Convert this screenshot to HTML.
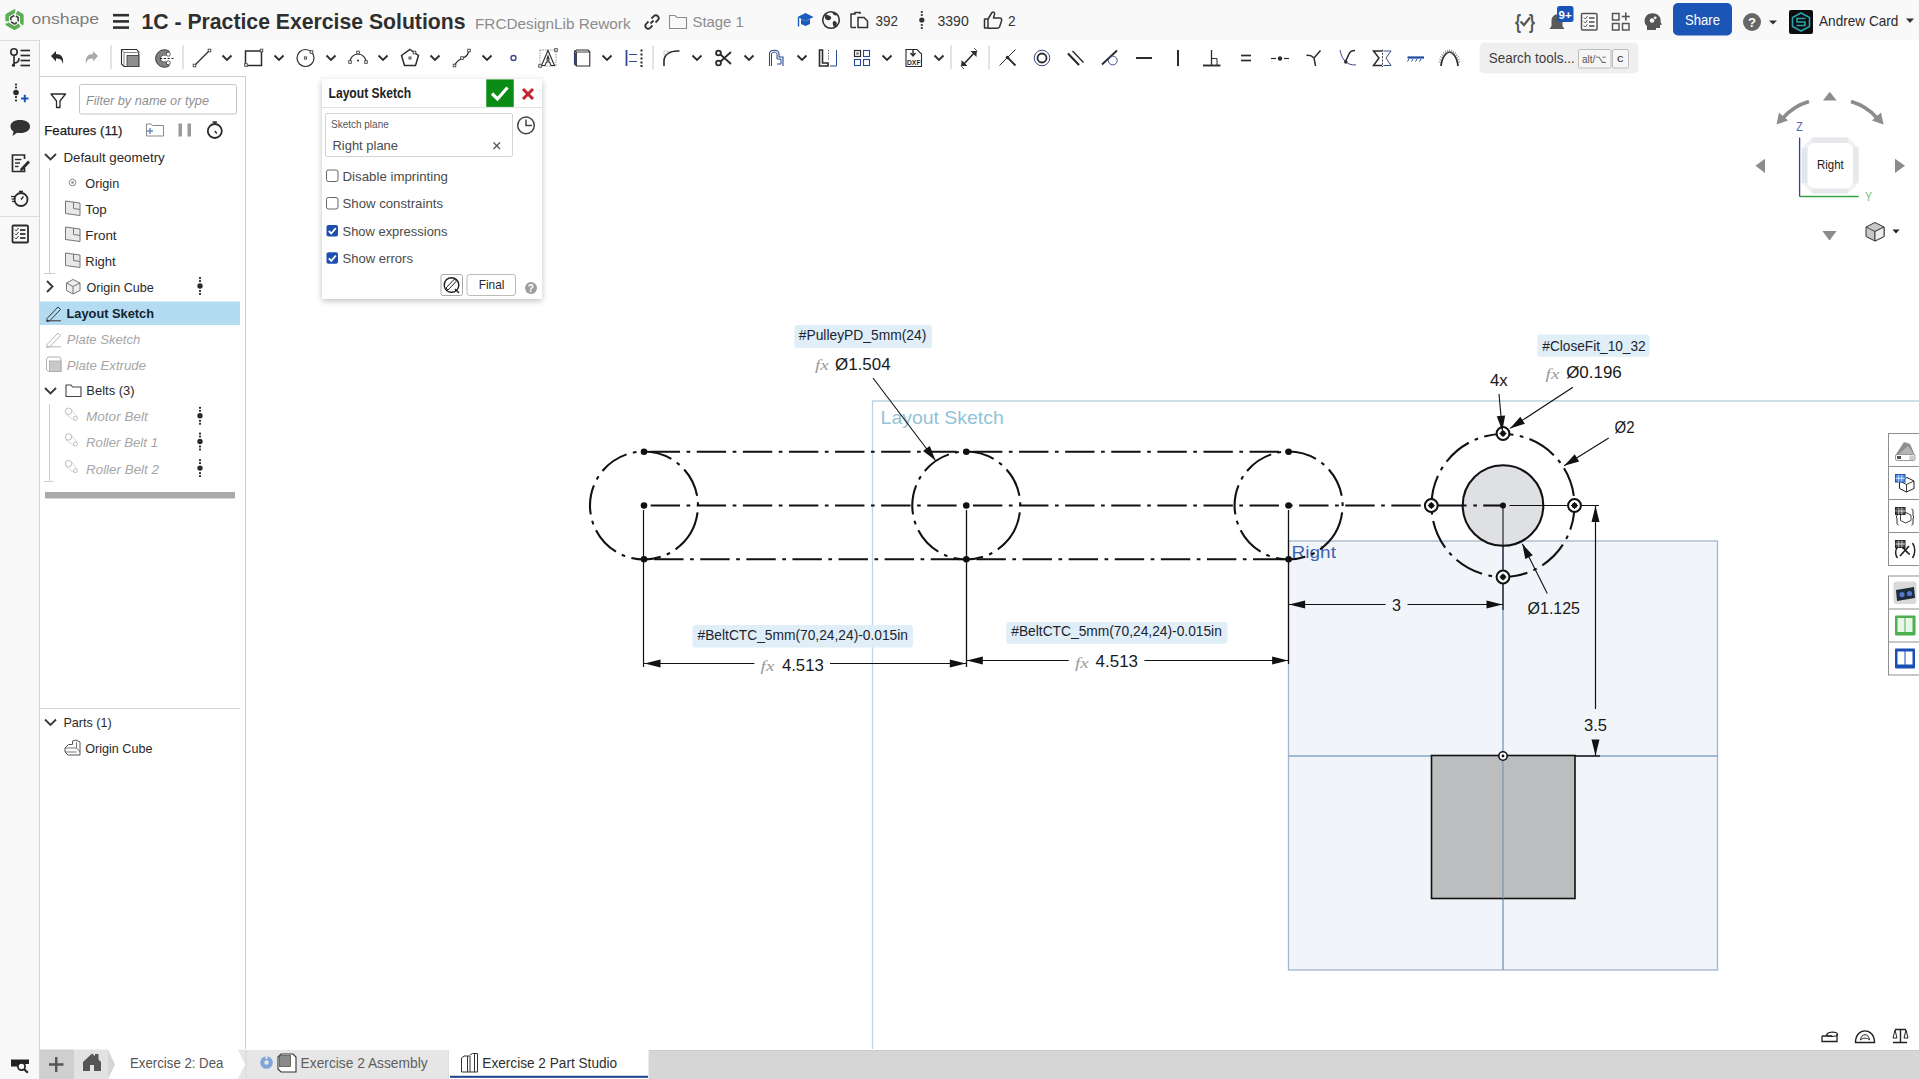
<!DOCTYPE html>
<html><head><meta charset="utf-8"><title>Onshape - 1C - Practice Exercise Solutions</title>
<style>
html,body{margin:0;padding:0;width:1919px;height:1079px;overflow:hidden;background:#fff;font-family:"Liberation Sans", sans-serif;}
svg{display:block;position:absolute;left:0;top:0;}
</style></head>
<body>
<svg width="1919" height="1079" viewBox="0 0 1919 1079">
<defs>
<filter id="sh" x="-20%" y="-20%" width="140%" height="140%"><feGaussianBlur in="SourceAlpha" stdDeviation="3"/><feOffset dy="2"/><feComponentTransfer><feFuncA type="linear" slope="0.25"/></feComponentTransfer><feMerge><feMergeNode/><feMergeNode in="SourceGraphic"/></feMerge></filter>
</defs>
<rect x="0" y="0" width="1919" height="1079" fill="#ffffff" />
<rect x="0" y="0" width="1919" height="40" fill="#f9f9f9" />
<rect x="0" y="40" width="39.5" height="1039" fill="#f8f8f8" />
<line x1="0" y1="40.5" x2="39.5" y2="40.5" stroke="#dcdcdc" stroke-width="1" />
<line x1="39.5" y1="40" x2="39.5" y2="1079" stroke="#d4d4d4" stroke-width="1" />
<line x1="0" y1="216.5" x2="39" y2="216.5" stroke="#dcdcdc" stroke-width="1" />
<line x1="40" y1="76.5" x2="245.5" y2="76.5" stroke="#cfcfcf" stroke-width="1" />
<line x1="245.5" y1="76" x2="245.5" y2="1049" stroke="#cfcfcf" stroke-width="1" />
<path d="M7.14,21.30 L7.14,15.35 L14.50,11.10 L14.87,11.31" fill="none" stroke="#5aad50" stroke-width="3.6" stroke-linejoin="round"/>
<path d="M16.71,12.38 L21.86,15.35 L21.86,23.85 L21.49,24.06" fill="none" stroke="#5aad50" stroke-width="3.6" stroke-linejoin="round"/>
<path d="M19.65,25.13 L14.50,28.10 L7.14,23.85 L7.14,23.42" fill="none" stroke="#5aad50" stroke-width="3.6" stroke-linejoin="round"/>
<path d="M15.80,16.05 L18.22,17.45 L18.22,21.54" fill="none" stroke="#454545" stroke-width="1.7" stroke-linejoin="round"/>
<path d="M16.92,22.50 L14.50,23.90 L10.96,21.86" fill="none" stroke="#454545" stroke-width="1.7" stroke-linejoin="round"/>
<path d="M10.78,20.25 L10.78,17.45 L14.31,15.41" fill="none" stroke="#454545" stroke-width="1.7" stroke-linejoin="round"/>
<text x="31.50" y="24.30" font-size="15.5" fill="#7c7c7c" font-weight="normal" font-style="normal" font-family="Liberation Sans" textLength="67.50" lengthAdjust="spacingAndGlyphs" >onshape</text>
<rect x="113" y="13.899999999999999" width="16" height="2.6" fill="#2e2e2e" />
<rect x="113" y="20.099999999999998" width="16" height="2.6" fill="#2e2e2e" />
<rect x="113" y="26.3" width="16" height="2.6" fill="#2e2e2e" />
<text x="141.50" y="28.50" font-size="22.5" fill="#2f2f2f" font-weight="bold" font-style="normal" font-family="Liberation Sans" textLength="324.00" lengthAdjust="spacingAndGlyphs" >1C - Practice Exercise Solutions</text>
<text x="475.00" y="28.50" font-size="15.3" fill="#8c8c8c" font-weight="normal" font-style="normal" font-family="Liberation Sans" textLength="155.60" lengthAdjust="spacingAndGlyphs" >FRCDesignLib Rework</text>
<g transform="translate(652,22) scale(1)">
<path d="M-1.5,1.5 L1.5,-1.5" fill="none" stroke="#333" stroke-width="1.8" />
<path d="M-0.5,-3.5 L1.8,-5.8 A2.6,2.6 0 0 1 5.8,-1.8 L3.5,0.5" fill="none" stroke="#333" stroke-width="1.8" />
<path d="M0.5,3.5 L-1.8,5.8 A2.6,2.6 0 0 1 -5.8,1.8 L-3.5,-0.5" fill="none" stroke="#333" stroke-width="1.8" />
</g>
<path d="M669.5,28.5 L669.5,15.5 L675,15.5 L677,17.5 L686.5,17.5 L686.5,28.5 Z" fill="none" stroke="#8c8c8c" stroke-width="1.1" />
<text x="692.50" y="26.60" font-size="15.4" fill="#8c8c8c" font-weight="normal" font-style="normal" font-family="Liberation Sans" textLength="51.30" lengthAdjust="spacingAndGlyphs" >Stage 1</text>
<path d="M797.5,17 L805.5,13 L813.5,17 L805.5,21 Z" fill="#1a5bc0" />
<path d="M801,19 L801,24 L805.5,26 L810,24 L810,19 L805.5,21 Z" fill="#1a5bc0" />
<line x1="798.5" y1="17.5" x2="798.5" y2="26.5" stroke="#1a5bc0" stroke-width="1.4" />
<circle cx="831" cy="20" r="8.3" fill="none" stroke="#333" stroke-width="1.6" />
<path d="M826,14 C828,16 830,15 831,17 C832,19 829,21 827,20 C825,19 824,17 826,14 Z" fill="#333" />
<path d="M834,21 C836,21 838,23 836,26 C835,27 833,27 833,25 C833,23 832,22 834,21 Z" fill="#333" />
<path d="M832,12 C834,13 836,13 837,15 C835,16 833,15 832,12 Z" fill="#333" />
<path d="M851,27.5 L851,14 L855,14 L855,12.5 L860,12.5 L860,14" fill="none" stroke="#333" stroke-width="1.5" />
<path d="M858,17.5 L864,17.5 L867.5,21 L867.5,27.5 L858,27.5 Z" fill="none" stroke="#333" stroke-width="1.5" />
<path d="M856,27.5 L851,27.5" fill="none" stroke="#333" stroke-width="1.5" />
<text x="875.60" y="25.60" font-size="15.4" fill="#333" font-weight="normal" font-style="normal" font-family="Liberation Sans" textLength="22.40" lengthAdjust="spacingAndGlyphs" >392</text>
<rect x="920.8" y="11.1" width="2" height="1.8" fill="#333" />
<rect x="920.8" y="14.1" width="2" height="1.8" fill="#333" />
<rect x="920.8" y="24.1" width="2" height="1.8" fill="#333" />
<rect x="920.8" y="27.1" width="2" height="1.8" fill="#333" />
<circle cx="921.8" cy="20" r="2.6" fill="#333" />
<text x="937.50" y="25.60" font-size="15.4" fill="#333" font-weight="normal" font-style="normal" font-family="Liberation Sans" textLength="31.20" lengthAdjust="spacingAndGlyphs" >3390</text>
<path d="M984.5,19 L988,19 L988,28 L984.5,28 Z M988,19 L992,12.5 C993.5,11.5 995,12.5 994.5,14.5 L993.5,18 L999.5,18 C1001.5,18 1002,19.5 1001.5,21 L999.5,27 C999,28 998,28.2 997,28.2 L988,28.2" fill="none" stroke="#333" stroke-width="1.5" stroke-linejoin="round"/>
<text x="1008.00" y="25.60" font-size="15.4" fill="#333" font-weight="normal" font-style="normal" font-family="Liberation Sans" textLength="7.60" lengthAdjust="spacingAndGlyphs" >2</text>
<text x="1515.00" y="29.00" font-size="20" fill="#555" font-weight="bold" font-style="normal" font-family="Liberation Sans" textLength="6.00" lengthAdjust="spacingAndGlyphs" >{</text>
<text x="1529.00" y="29.00" font-size="20" fill="#555" font-weight="bold" font-style="normal" font-family="Liberation Sans" textLength="6.00" lengthAdjust="spacingAndGlyphs" >}</text>
<path d="M1520.5,21.5 L1524,25 L1530,17.5" fill="none" stroke="#555" stroke-width="2.2" />
<path d="M1549.5,29 L1564.5,29 L1562.5,26 L1562.5,21 C1562.5,17 1560,14.5 1557,14.5 C1554,14.5 1551.5,17 1551.5,21 L1551.5,26 Z" fill="#5a5a5a" />
<rect x="1557" y="6" width="16.5" height="16" fill="#1a55b8" rx="2.5" />
<text x="1558.60" y="18.80" font-size="11.5" fill="#ffffff" font-weight="bold" font-style="normal" font-family="Liberation Sans" textLength="13.00" lengthAdjust="spacingAndGlyphs" >9+</text>
<rect x="1581.5" y="13.5" width="15.5" height="16.5" fill="none" stroke="#555" stroke-width="1.5" rx="1" />
<line x1="1589" y1="18" x2="1594.5" y2="18" stroke="#555" stroke-width="1.6" />
<path d="M1583.8,17.5 L1585.3,19 L1587.5,16.2" fill="none" stroke="#555" stroke-width="1" />
<line x1="1589" y1="22" x2="1594.5" y2="22" stroke="#555" stroke-width="1.6" />
<path d="M1583.8,21.5 L1585.3,23 L1587.5,20.2" fill="none" stroke="#555" stroke-width="1" />
<line x1="1589" y1="26" x2="1594.5" y2="26" stroke="#555" stroke-width="1.6" />
<path d="M1583.8,25.5 L1585.3,27 L1587.5,24.2" fill="none" stroke="#555" stroke-width="1" />
<rect x="1612.5" y="13.5" width="6.5" height="6.5" fill="none" stroke="#555" stroke-width="1.5" />
<rect x="1612.5" y="23.5" width="6.5" height="6.5" fill="none" stroke="#555" stroke-width="1.5" />
<rect x="1622.5" y="23.5" width="6.5" height="6.5" fill="none" stroke="#555" stroke-width="1.5" />
<line x1="1625.8" y1="12.5" x2="1625.8" y2="20.5" stroke="#555" stroke-width="1.6" />
<line x1="1621.8" y1="16.5" x2="1629.8" y2="16.5" stroke="#555" stroke-width="1.6" />
<path d="M1647,30 L1647,26 C1644,24 1644,19 1646,16.5 C1648,13 1655,12 1658.5,15.5 C1660.5,17.5 1661,20 1660.5,22 L1662,24.5 L1660,25 L1660,28 L1656,28 L1656,30 Z" fill="#555" />
<circle cx="1652" cy="20.5" r="2.3" fill="#f6f6f6" />
<circle cx="1655.2" cy="17.8" r="1.4" fill="#f6f6f6" />
<rect x="1673" y="3" width="59" height="32.5" fill="#1b56b6" rx="5" />
<text x="1685.00" y="25.00" font-size="15.4" fill="#ffffff" font-weight="normal" font-style="normal" font-family="Liberation Sans" textLength="35.00" lengthAdjust="spacingAndGlyphs" >Share</text>
<circle cx="1752" cy="22" r="9" fill="#666" />
<text x="1748.00" y="27.00" font-size="13.5" fill="#ffffff" font-weight="bold" font-style="normal" font-family="Liberation Sans" textLength="8.00" lengthAdjust="spacingAndGlyphs" >?</text>
<path d="M1769,20.5 L1777,20.5 L1773,24.5 Z" fill="#333" />
<rect x="1789" y="10" width="24" height="24" fill="#0d0d0d" rx="2" />
<path d="M1801,13 L1809.5,17.5 L1809.5,26.5 L1801,31 L1792.5,26.5 L1792.5,17.5 Z" fill="none" stroke="#2aa0ad" stroke-width="1.6" />
<path d="M1805.5,18.5 L1797,18.5 L1797,22 L1805,22 L1805,25.5 L1796.5,25.5" fill="none" stroke="#2aa0ad" stroke-width="1.6" />
<text x="1819.00" y="25.50" font-size="14.2" fill="#2a2a2a" font-weight="normal" font-style="normal" font-family="Liberation Sans" textLength="79.40" lengthAdjust="spacingAndGlyphs" >Andrew Card</text>
<path d="M1906,18.5 L1914,18.5 L1910,23 Z" fill="#333" />
<circle cx="14" cy="52" r="3.2" fill="none" stroke="#2b2b2b" stroke-width="1.6" />
<path d="M14,55.2 L14,65 M14,63 C16,63 19,62 19,58" fill="none" stroke="#2b2b2b" stroke-width="1.6" />
<circle cx="13.5" cy="65.2" r="1.6" fill="#2b2b2b" />
<line x1="20.5" y1="50.5" x2="30" y2="50.5" stroke="#2b2b2b" stroke-width="1.7" />
<line x1="20.5" y1="55.5" x2="30" y2="55.5" stroke="#2b2b2b" stroke-width="1.7" />
<line x1="20.5" y1="60.5" x2="30" y2="60.5" stroke="#2b2b2b" stroke-width="1.7" />
<line x1="20.5" y1="65.5" x2="30" y2="65.5" stroke="#2b2b2b" stroke-width="1.7" />
<path d="M51,56 L56,51 L56,54 C61,54 64,57 63,64 C62,59.5 60,58.5 56,58.5 L56,61.5 Z" fill="#2b2b2b" />
<path d="M98,56 L93,51 L93,54 C88,54 85,57 86,64 C87,59.5 89,58.5 93,58.5 L93,61.5 Z" fill="#a9a9a9" />
<line x1="111" y1="45.5" x2="111" y2="69.5" stroke="#d0d0d0" stroke-width="1.2" />
<path d="M121.5,49.5 L136.5,49.5 L138.8,52 L138.8,66.5 L124,66.5 L121.5,64 Z" fill="#fff" stroke="#2b2b2b" stroke-width="1.1" />
<path d="M124,52.5 L136.5,52.5 L138.8,52 M124,52.5 L124,66.5 M121.5,49.5 L124,52.5" fill="none" stroke="#666" stroke-width="0.8" />
<rect x="127" y="55.5" width="11.8" height="11" fill="#8f8f8f" stroke="#444" stroke-width="0.9" />
<path d="M168.2,53.8 A6.2,6.2 0 1 0 168.2,63.2" fill="none" stroke="#808080" stroke-width="5.2" />
<path d="M169.5,51.3 A8.8,8.8 0 1 0 169.5,65.7" fill="none" stroke="#333" stroke-width="0.9" />
<path d="M165.6,55.6 A3.4,3.4 0 1 0 165.6,61.4" fill="none" stroke="#333" stroke-width="0.8" />
<circle cx="168.3" cy="54.2" r="2.0" fill="#fff" stroke="#333" stroke-width="0.8" />
<circle cx="168.3" cy="62.8" r="2.0" fill="#fff" stroke="#333" stroke-width="0.8" />
<line x1="160" y1="58.5" x2="173.5" y2="58.5" stroke="#222" stroke-width="1.2" stroke-dasharray="2.2 1.6"/>
<line x1="183" y1="45.5" x2="183" y2="69.5" stroke="#d0d0d0" stroke-width="1.2" />
<line x1="194.5" y1="65.5" x2="209.5" y2="50.5" stroke="#2b2b2b" stroke-width="1.3" />
<rect x="193.2" y="64.2" width="2.6" height="2.6" fill="#fff" stroke="#444" stroke-width="0.9" />
<rect x="208.2" y="49.2" width="2.6" height="2.6" fill="#fff" stroke="#444" stroke-width="0.9" />
<path d="M222.5,55.5 L227,60 L231.5,55.5" fill="none" stroke="#2b2b2b" stroke-width="1.8" />
<rect x="245.5" y="51" width="16" height="14.5" fill="none" stroke="#2b2b2b" stroke-width="1.5" />
<rect x="244.7" y="63.7" width="2.6" height="2.6" fill="#fff" stroke="#444" stroke-width="0.9" />
<rect x="260.2" y="49.2" width="2.6" height="2.6" fill="#fff" stroke="#444" stroke-width="0.9" />
<path d="M274.5,55.5 L279,60 L283.5,55.5" fill="none" stroke="#2b2b2b" stroke-width="1.8" />
<circle cx="305.5" cy="58" r="8.5" fill="none" stroke="#2b2b2b" stroke-width="1.2" />
<rect x="304.4" y="56.9" width="2.2" height="2.2" fill="#fff" stroke="#444" stroke-width="0.9" />
<rect x="310.2" y="50.7" width="2.6" height="2.6" fill="#fff" stroke="#444" stroke-width="0.9" />
<path d="M326.5,55.5 L331,60 L335.5,55.5" fill="none" stroke="#2b2b2b" stroke-width="1.8" />
<path d="M350,62 A8,8 0 0 1 366,62" fill="none" stroke="#2b2b2b" stroke-width="1.2" />
<rect x="348.7" y="60.7" width="2.6" height="2.6" fill="#fff" stroke="#444" stroke-width="0.9" />
<rect x="364.7" y="60.7" width="2.6" height="2.6" fill="#fff" stroke="#444" stroke-width="0.9" />
<rect x="356.7" y="51.2" width="2.6" height="2.6" fill="#fff" stroke="#444" stroke-width="0.9" />
<line x1="357" y1="60.5" x2="359" y2="60.5" stroke="#2b2b2b" stroke-width="1.5" />
<path d="M378.5,55.5 L383,60 L387.5,55.5" fill="none" stroke="#2b2b2b" stroke-width="1.8" />
<path d="M410,49.5 L418.5,55.5 L415.5,65.5 L404.5,65.5 L401.5,55.5 Z" fill="none" stroke="#2b2b2b" stroke-width="1.5" />
<rect x="409.0" y="57.0" width="2" height="2" fill="#fff" stroke="#444" stroke-width="0.9" />
<rect x="413.2" y="51.2" width="2.6" height="2.6" fill="#fff" stroke="#444" stroke-width="0.9" />
<path d="M430.5,55.5 L435,60 L439.5,55.5" fill="none" stroke="#2b2b2b" stroke-width="1.8" />
<path d="M454.5,65.5 C457,60 461,59 463,58 C466,57 468,55 469,50.5" fill="none" stroke="#2b2b2b" stroke-width="1.2" />
<rect x="453.2" y="64.2" width="2.6" height="2.6" fill="#fff" stroke="#444" stroke-width="0.9" />
<rect x="460.7" y="56.7" width="2.6" height="2.6" fill="#fff" stroke="#444" stroke-width="0.9" />
<rect x="467.7" y="49.2" width="2.6" height="2.6" fill="#fff" stroke="#444" stroke-width="0.9" />
<path d="M482.5,55.5 L487,60 L491.5,55.5" fill="none" stroke="#2b2b2b" stroke-width="1.8" />
<circle cx="513.5" cy="58" r="2.5" fill="none" stroke="#3d4a8a" stroke-width="1.4" />
<rect x="540" y="50" width="16" height="16" fill="none" stroke="#555" stroke-width="0.6" stroke-dasharray="1.5 1"/>
<path d="M541.5,65.5 L548,50.5 L554.5,65.5 L551,65.5 L549.6,62 L546.4,62 L545,65.5 Z M547,59 L549,59 L548,56 Z" fill="#fff" stroke="#2b2b2b" stroke-width="1.1" />
<rect x="546.5" y="59.5" width="3" height="2" fill="#555" />
<rect x="554.7" y="48.7" width="2.6" height="2.6" fill="#fff" stroke="#444" stroke-width="0.9" />
<rect x="538.7" y="64.7" width="2.6" height="2.6" fill="#fff" stroke="#444" stroke-width="0.9" />
<path d="M574.5,52 L576.5,50 L588,50 L589.8,51.8 L589.8,66 L576.5,66 L574.5,64 Z" fill="#fff" stroke="#2b2b2b" stroke-width="1.1" />
<path d="M576.5,52 L589.8,52 M576.5,52 L576.5,66 M574.5,50.5 L576.5,52" fill="none" stroke="#2b2b2b" stroke-width="0.9" />
<line x1="575.3" y1="52.5" x2="575.3" y2="65" stroke="#2a4b8f" stroke-width="1.8" />
<path d="M602.5,55.5 L607,60 L611.5,55.5" fill="none" stroke="#2b2b2b" stroke-width="1.8" />
<line x1="626.5" y1="50" x2="626.5" y2="66" stroke="#2a4b8f" stroke-width="1.8" />
<path d="M629,54.5 L637,54.5 M629,61.5 L637,61.5" fill="none" stroke="#2a4b8f" stroke-width="1" />
<rect x="640.5" y="49.5" width="2" height="2" fill="#2b2b2b" />
<rect x="640.5" y="53.5" width="2" height="2" fill="#2b2b2b" />
<rect x="640.5" y="57.5" width="2" height="2" fill="#2b2b2b" />
<rect x="640.5" y="61.5" width="2" height="2" fill="#2b2b2b" />
<rect x="640.5" y="65" width="2" height="2" fill="#2b2b2b" />
<line x1="653" y1="45.5" x2="653" y2="69.5" stroke="#d0d0d0" stroke-width="1.2" />
<path d="M664,66 L664,61 C664,55 669,50.5 679.5,51" fill="none" stroke="#2b2b2b" stroke-width="1.6" />
<rect x="664" y="51" width="4" height="4" fill="none" stroke="#999" stroke-width="0.5" />
<path d="M692.5,55.5 L697,60 L701.5,55.5" fill="none" stroke="#2b2b2b" stroke-width="1.8" />
<circle cx="718.5" cy="53" r="2.4" fill="none" stroke="#2b2b2b" stroke-width="1.8" />
<circle cx="718.5" cy="63" r="2.4" fill="none" stroke="#2b2b2b" stroke-width="1.8" />
<path d="M720.5,54.5 L731,64 M720.5,61.5 L731,52" fill="none" stroke="#2b2b2b" stroke-width="1.8" />
<path d="M744.5,55.5 L749,60 L753.5,55.5" fill="none" stroke="#2b2b2b" stroke-width="1.8" />
<path d="M769.5,66 L769.5,54 C769.5,49 779,49 779,54 L779,57 L783,57 L783,66" fill="none" stroke="#2a4b8f" stroke-width="1.1" />
<path d="M771.5,66 L771.5,54 C771.5,51.5 777,51.5 777,54 L777,59 L781,59 L781,64 L777,64" fill="none" stroke="#2a4b8f" stroke-width="1" />
<path d="M797.5,55.5 L802,60 L806.5,55.5" fill="none" stroke="#2b2b2b" stroke-width="1.8" />
<path d="M819.5,50 L822.5,50 L822.5,63 L828,63 L828,66 L819.5,66 Z" fill="none" stroke="#2b2b2b" stroke-width="1.6" />
<path d="M836.5,50 L836.5,66 L830,66" fill="none" stroke="#2a4b8f" stroke-width="1" />
<line x1="828.5" y1="50" x2="828.5" y2="61" stroke="#555" stroke-width="1" stroke-dasharray="1.2 1.5"/>
<rect x="854.5" y="50.5" width="6" height="6" fill="none" stroke="#2b2b2b" stroke-width="1.2" />
<rect x="856.3" y="52.3" width="2.4" height="2.4" fill="#777" />
<rect x="863.5" y="50.5" width="6" height="6" fill="none" stroke="#2a4b8f" stroke-width="1.1" />
<rect x="854.5" y="59.5" width="6" height="6" fill="none" stroke="#2a4b8f" stroke-width="1.1" />
<rect x="863.5" y="59.5" width="6" height="6" fill="none" stroke="#2a4b8f" stroke-width="1.1" />
<path d="M882.5,55.5 L887,60 L891.5,55.5" fill="none" stroke="#2b2b2b" stroke-width="1.8" />
<path d="M906,49.5 L917,49.5 L921.5,54 L921.5,66.5 L906,66.5 Z" fill="none" stroke="#2b2b2b" stroke-width="1.1" />
<path d="M913,50 L913,55 M910.5,53 L913,56 L915.5,53" fill="none" stroke="#2b2b2b" stroke-width="1.4" />
<text x="907.00" y="64.80" font-size="6.5" fill="#2b2b2b" font-weight="bold" font-style="normal" font-family="Liberation Sans" textLength="13.50" lengthAdjust="spacingAndGlyphs" >DXF</text>
<path d="M934.5,55.5 L939,60 L943.5,55.5" fill="none" stroke="#2b2b2b" stroke-width="1.8" />
<line x1="951" y1="45.5" x2="951" y2="69.5" stroke="#d0d0d0" stroke-width="1.2" />
<path d="M963,65 L975,52" fill="none" stroke="#2b2b2b" stroke-width="1.6" />
<path d="M961.5,66 L961.5,60 L967.5,66 Z M976.5,51 L976.5,57 L970.5,51 Z" fill="#2b2b2b" />
<path d="M963,62 L961,66 L964,69 M975,55 L977,51 L974,48" fill="none" stroke="#2b2b2b" stroke-width="0.8" />
<line x1="989" y1="45.5" x2="989" y2="69.5" stroke="#d0d0d0" stroke-width="1.2" />
<path d="M999.5,65.5 L1015.5,49.5" fill="none" stroke="#2b2b2b" stroke-width="1" />
<path d="M1007.5,57.5 L1015.5,65.5" fill="none" stroke="#2b2b2b" stroke-width="1.8" />
<circle cx="1007.5" cy="57.5" r="1.8" fill="#2b2b2b" />
<circle cx="1042" cy="58" r="7.8" fill="none" stroke="#3d4a8a" stroke-width="1" />
<circle cx="1042" cy="58" r="4.5" fill="none" stroke="#2b2b2b" stroke-width="1.8" />
<path d="M1068,53.5 L1079,65 M1072.5,51 L1083.5,62.5" fill="none" stroke="#2b2b2b" stroke-width="1.4" />
<path d="M1068,53.5 L1079,65" fill="none" stroke="#2b2b2b" stroke-width="1.9" />
<path d="M1102,64.5 L1117,50.5" fill="none" stroke="#2b2b2b" stroke-width="1.9" />
<circle cx="1112.8" cy="60.5" r="4.4" fill="none" stroke="#3d4a8a" stroke-width="1" />
<line x1="1136" y1="58" x2="1152" y2="58" stroke="#2b2b2b" stroke-width="2" />
<line x1="1178" y1="50" x2="1178" y2="66" stroke="#2b2b2b" stroke-width="2" />
<line x1="1203" y1="65.5" x2="1220.5" y2="65.5" stroke="#2b2b2b" stroke-width="1.9" />
<line x1="1211.5" y1="50" x2="1211.5" y2="65.5" stroke="#2b2b2b" stroke-width="1.3" />
<path d="M1211.5,58.5 L1217,58.5 L1217,65.5" fill="none" stroke="#2b2b2b" stroke-width="1" />
<line x1="1241" y1="55.5" x2="1251" y2="55.5" stroke="#2b2b2b" stroke-width="1.7" />
<line x1="1241" y1="60.5" x2="1251" y2="60.5" stroke="#2b2b2b" stroke-width="1.7" />
<line x1="1271" y1="58.5" x2="1276" y2="58.5" stroke="#2b2b2b" stroke-width="1.2" />
<line x1="1284" y1="58.5" x2="1289" y2="58.5" stroke="#2b2b2b" stroke-width="1.2" />
<circle cx="1280" cy="58.5" r="2.2" fill="#2b2b2b" />
<path d="M1306.5,55.5 C1309,55 1312,56 1314,58 M1314,58 L1320.5,50.5 M1314,58 C1314.5,61 1315,63 1315.5,66" fill="none" stroke="#2b2b2b" stroke-width="1.5" />
<path d="M1340,50 C1341,55 1343,60 1346,62 C1348,64 1351,65 1356,65" fill="none" stroke="#3d4a8a" stroke-width="1" />
<path d="M1345.5,61.5 L1349.5,53 C1350.5,51 1352,50.5 1355,50.5" fill="none" stroke="#2b2b2b" stroke-width="1.6" />
<circle cx="1345.8" cy="62" r="1.8" fill="#2b2b2b" />
<path d="M1382,51 L1373.5,51 L1379,58 L1373.5,65.5 L1382,65.5" fill="none" stroke="#2b2b2b" stroke-width="1.5" />
<path d="M1383.5,51 L1391,51 L1386,58 L1391,65.5 L1383.5,65.5" fill="none" stroke="#3d4a8a" stroke-width="1" />
<line x1="1382.5" y1="49.5" x2="1382.5" y2="67" stroke="#2b2b2b" stroke-width="0.9" stroke-dasharray="2 1.3"/>
<line x1="1407.5" y1="57.5" x2="1424" y2="57.5" stroke="#1b4a9a" stroke-width="2.2" />
<line x1="1409" y1="59" x2="1407.5" y2="61.5" stroke="#1b4a9a" stroke-width="1" />
<line x1="1413" y1="59" x2="1411.5" y2="61.5" stroke="#1b4a9a" stroke-width="1" />
<line x1="1417" y1="59" x2="1415.5" y2="61.5" stroke="#1b4a9a" stroke-width="1" />
<line x1="1421" y1="59" x2="1419.5" y2="61.5" stroke="#1b4a9a" stroke-width="1" />
<path d="M1441,66 C1442,56 1447,52 1449.5,52 C1452,52 1457,56 1458,66" fill="none" stroke="#2b2b2b" stroke-width="1.7" />
<line x1="1441.1046491049412" y1="62.27922088455746" x2="1438.6354282534535" y2="61.73170025691665" stroke="#666" stroke-width="0.7" />
<line x1="1441.5420035995621" y1="60.134876935105225" x2="1439.201416422963" y2="58.90506505082053" stroke="#666" stroke-width="0.7" />
<line x1="1442.3028443065596" y1="58.147647158331296" x2="1440.186033808489" y2="56.285534890527614" stroke="#666" stroke-width="0.7" />
<line x1="1443.356243657467" y1="56.39831086114449" x2="1441.5492564978988" y2="53.97959158969046" stroke="#666" stroke-width="0.7" />
<line x1="1444.6593818080682" y1="54.95797717007299" x2="1443.235670575147" y2="52.08096990600531" stroke="#666" stroke-width="0.7" />
<line x1="1446.1592872309416" y1="53.885194501934045" x2="1445.1767246518068" y2="50.666847298003965" stroke="#666" stroke-width="0.7" />
<line x1="1447.7949899658422" y1="53.22357061734441" x2="1447.293516426384" y2="49.79470672286308" stroke="#666" stroke-width="0.7" />
<line x1="1449.5" y1="53.0" x2="1449.5" y2="49.5" stroke="#666" stroke-width="0.7" />
<line x1="1451.2050100341578" y1="53.22357061734441" x2="1451.706483573616" y2="49.79470672286308" stroke="#666" stroke-width="0.7" />
<line x1="1452.8407127690584" y1="53.885194501934045" x2="1453.8232753481932" y2="50.666847298003965" stroke="#666" stroke-width="0.7" />
<line x1="1454.3406181919318" y1="54.95797717007299" x2="1455.764329424853" y2="52.08096990600531" stroke="#666" stroke-width="0.7" />
<line x1="1455.643756342533" y1="56.39831086114449" x2="1457.4507435021012" y2="53.979591589690465" stroke="#666" stroke-width="0.7" />
<line x1="1456.6971556934404" y1="58.147647158331296" x2="1458.813966191511" y2="56.285534890527614" stroke="#666" stroke-width="0.7" />
<line x1="1457.4579964004379" y1="60.13487693510523" x2="1459.798583577037" y2="58.90506505082053" stroke="#666" stroke-width="0.7" />
<line x1="1457.8953508950588" y1="62.27922088455746" x2="1460.3645717465465" y2="61.73170025691665" stroke="#666" stroke-width="0.7" />
<rect x="1479.5" y="42.5" width="159" height="31" fill="#efefef" rx="5" />
<text x="1488.70" y="62.50" font-size="14.5" fill="#3e3e3e" font-weight="normal" font-style="normal" font-family="Liberation Sans" textLength="86.00" lengthAdjust="spacingAndGlyphs" >Search tools...</text>
<rect x="1578.5" y="49.5" width="32.5" height="18.5" fill="#f6f6f6" stroke="#bdbdbd" stroke-width="1" rx="1.5" />
<text x="1582.00" y="62.50" font-size="11" fill="#555" font-weight="normal" font-style="normal" font-family="Liberation Sans" textLength="25.00" lengthAdjust="spacingAndGlyphs" >alt/⌥</text>
<rect x="1612.5" y="49.5" width="16" height="18.5" fill="#f6f6f6" stroke="#bdbdbd" stroke-width="1" rx="1.5" />
<text x="1617.00" y="62.00" font-size="11.5" fill="#333" font-weight="normal" font-style="normal" font-family="Liberation Sans" textLength="6.50" lengthAdjust="spacingAndGlyphs" >c</text>
<rect x="15" y="83.6" width="2" height="1.8" fill="#2b2b2b" />
<rect x="15" y="86.6" width="2" height="1.8" fill="#2b2b2b" />
<rect x="15" y="96.1" width="2" height="1.8" fill="#2b2b2b" />
<rect x="15" y="99.6" width="2" height="1.8" fill="#2b2b2b" />
<circle cx="16" cy="92.5" r="2.8" fill="#2b2b2b" />
<path d="M21,98.5 L28.5,98.5 M24.8,94.8 L24.8,102.2" fill="none" stroke="#1a55b8" stroke-width="2" />
<path d="M20,120 C26,120 30,122.5 30,126.5 C30,130.5 26,133 20,133 C19,133 18,133 17,132.8 L12.5,136 L13.5,131.5 C11.5,130.2 10.5,128.5 10.5,126.5 C10.5,122.5 14,120 20,120 Z" fill="#333" />
<path d="M24.5,159 L24.5,155 L12.5,155 L12.5,171.5 L24.5,171.5 L24.5,168" fill="none" stroke="#2b2b2b" stroke-width="1.7" />
<line x1="15" y1="159.5" x2="21.5" y2="159.5" stroke="#2b2b2b" stroke-width="1.4" />
<line x1="15" y1="163" x2="20" y2="163" stroke="#2b2b2b" stroke-width="1.4" />
<line x1="15" y1="166.5" x2="18.5" y2="166.5" stroke="#2b2b2b" stroke-width="1.4" />
<path d="M20.5,168.5 L28,160.5 L30,162.5 L22.5,170.5 L20,171 Z" fill="#2b2b2b" />
<circle cx="21" cy="199.5" r="6.5" fill="none" stroke="#2b2b2b" stroke-width="1.8" />
<line x1="19" y1="191.5" x2="23" y2="191.5" stroke="#2b2b2b" stroke-width="1.6" />
<line x1="21" y1="199.5" x2="23.5" y2="196.5" stroke="#2b2b2b" stroke-width="1.4" />
<line x1="11.0" y1="196.5" x2="15.5" y2="196.5" stroke="#2b2b2b" stroke-width="1.2" />
<line x1="11.5" y1="199" x2="15.5" y2="199" stroke="#2b2b2b" stroke-width="1.2" />
<line x1="12.0" y1="201.5" x2="15.5" y2="201.5" stroke="#2b2b2b" stroke-width="1.2" />
<rect x="12.5" y="225.5" width="15.5" height="17" fill="none" stroke="#2b2b2b" stroke-width="1.8" rx="1" />
<line x1="20" y1="230" x2="25.5" y2="230" stroke="#2b2b2b" stroke-width="1.7" />
<path d="M14.8,229.6 L16.2,231 L18.5,228" fill="none" stroke="#2b2b2b" stroke-width="0.9" />
<line x1="20" y1="234" x2="25.5" y2="234" stroke="#2b2b2b" stroke-width="1.7" />
<path d="M14.8,233.6 L16.2,235 L18.5,232" fill="none" stroke="#2b2b2b" stroke-width="0.9" />
<line x1="20" y1="238" x2="25.5" y2="238" stroke="#2b2b2b" stroke-width="1.7" />
<path d="M14.8,237.6 L16.2,239 L18.5,236" fill="none" stroke="#2b2b2b" stroke-width="0.9" />
<path d="M11,1059.5 L29,1059.5 L29,1064 L25,1064 C23,1062.5 19,1063 18,1066.5 L11,1066.5 Z" fill="#222" />
<circle cx="21.5" cy="1066.5" r="3.6" fill="#f8f8f8" stroke="#222" stroke-width="1.7" />
<line x1="24.2" y1="1069.2" x2="27.8" y2="1072.8" stroke="#222" stroke-width="2" />
<path d="M51,94 L65.5,94 L60,101 L60,107.5 L56.5,107.5 L56.5,101 Z" fill="none" stroke="#2b2b2b" stroke-width="1.3" stroke-linejoin="round"/>
<rect x="79.5" y="84.5" width="157" height="29.5" fill="#fff" stroke="#c4c4c4" stroke-width="1" rx="2" />
<text x="86.00" y="104.70" font-size="13.2" fill="#8f8f8f" font-weight="normal" font-style="italic" font-family="Liberation Sans" textLength="123.00" lengthAdjust="spacingAndGlyphs" >Filter by name or type</text>
<text x="44.30" y="134.60" font-size="13.4" fill="#1e1e1e" font-weight="normal" font-style="normal" font-family="Liberation Sans" textLength="78.20" lengthAdjust="spacingAndGlyphs" stroke="#1e1e1e" stroke-width="0.25">Features (11)</text>
<path d="M146.5,124 L151,124 L152.5,125.5 L163.5,125.5 L163.5,136 L146.5,136 Z" fill="none" stroke="#888" stroke-width="1" />
<path d="M147,131 L153,131 M150,128 L150,134" fill="none" stroke="#6a8bc4" stroke-width="1.5" />
<rect x="178.5" y="123.5" width="3.5" height="13" fill="#9a9a9a" />
<rect x="187.5" y="123.5" width="3.5" height="13" fill="#9a9a9a" />
<circle cx="214.8" cy="131" r="7" fill="none" stroke="#2b2b2b" stroke-width="1.8" />
<line x1="212.5" y1="122" x2="217" y2="122" stroke="#2b2b2b" stroke-width="1.5" />
<line x1="214.8" y1="122" x2="214.8" y2="124" stroke="#2b2b2b" stroke-width="1.5" />
<line x1="214.8" y1="131" x2="216.8" y2="133.5" stroke="#2b2b2b" stroke-width="1.4" />
<path d="M45,154 L50.5,159.5 L56,154" fill="none" stroke="#3a3a3a" stroke-width="1.9" />
<text x="63.40" y="162.00" font-size="13.5" fill="#2a2a2a" font-weight="normal" font-style="normal" font-family="Liberation Sans" textLength="101.40" lengthAdjust="spacingAndGlyphs" >Default geometry</text>
<line x1="49.5" y1="168" x2="49.5" y2="273.5" stroke="#cfcfcf" stroke-width="1" />
<line x1="44" y1="273.5" x2="55" y2="273.5" stroke="#cfcfcf" stroke-width="1" />
<circle cx="72.5" cy="182.5" r="3.3" fill="none" stroke="#888" stroke-width="1" />
<circle cx="72.5" cy="182.5" r="1.3" fill="#888" />
<text x="85.30" y="187.80" font-size="13.5" fill="#2a2a2a" font-weight="normal" font-style="normal" font-family="Liberation Sans" textLength="33.90" lengthAdjust="spacingAndGlyphs" >Origin</text>
<path d="M65.5,201 L80.0,203 L80.0,215.5 L65.5,213.5 Z" fill="#e8e8e8" stroke="#777" stroke-width="1" />
<path d="M73.5,202 L73.5,208.5 L80.0,209.5" fill="none" stroke="#777" stroke-width="1" />
<text x="85.30" y="213.70" font-size="13.5" fill="#2a2a2a" font-weight="normal" font-style="normal" font-family="Liberation Sans" textLength="21.50" lengthAdjust="spacingAndGlyphs" >Top</text>
<path d="M65.5,227 L80.0,229 L80.0,241.5 L65.5,239.5 Z" fill="#e8e8e8" stroke="#777" stroke-width="1" />
<path d="M73.5,228 L73.5,234.5 L80.0,235.5" fill="none" stroke="#777" stroke-width="1" />
<text x="85.30" y="239.80" font-size="13.5" fill="#2a2a2a" font-weight="normal" font-style="normal" font-family="Liberation Sans" textLength="31.30" lengthAdjust="spacingAndGlyphs" >Front</text>
<path d="M65.5,253 L80.0,255 L80.0,267.5 L65.5,265.5 Z" fill="#e8e8e8" stroke="#777" stroke-width="1" />
<path d="M73.5,254 L73.5,260.5 L80.0,261.5" fill="none" stroke="#777" stroke-width="1" />
<text x="85.30" y="265.80" font-size="13.5" fill="#2a2a2a" font-weight="normal" font-style="normal" font-family="Liberation Sans" textLength="30.40" lengthAdjust="spacingAndGlyphs" >Right</text>
<path d="M47,281 L52.5,286.5 L47,292" fill="none" stroke="#3a3a3a" stroke-width="1.9" />
<path d="M73,279.5 L80,283 L80,290.5 L73,294 L66.5,290.5 L66.5,283 Z" fill="#eee" stroke="#777" stroke-width="1" />
<path d="M66.5,283 L73,286.5 L80,283 M73,286.5 L73,294" fill="none" stroke="#777" stroke-width="1" />
<text x="86.60" y="291.60" font-size="13.5" fill="#2a2a2a" font-weight="normal" font-style="normal" font-family="Liberation Sans" textLength="67.10" lengthAdjust="spacingAndGlyphs" >Origin Cube</text>
<rect x="199" y="277.1" width="2" height="1.8" fill="#2b2b2b" />
<rect x="199" y="280.1" width="2" height="1.8" fill="#2b2b2b" />
<rect x="199" y="290.1" width="2" height="1.8" fill="#2b2b2b" />
<rect x="199" y="293.1" width="2" height="1.8" fill="#2b2b2b" />
<circle cx="200" cy="286" r="2.7" fill="#2b2b2b" />
<rect x="40" y="301.5" width="200" height="23.5" fill="#b3dcf3" />
<path d="M47,318.5 L58,307 L60.5,309.5 L49.5,321 L47,321.5 Z" fill="none" stroke="#333" stroke-width="1" />
<line x1="46" y1="320.8" x2="61" y2="320.8" stroke="#333" stroke-width="1" />
<text x="66.50" y="317.80" font-size="13.5" fill="#15222e" font-weight="bold" font-style="normal" font-family="Liberation Sans" textLength="87.50" lengthAdjust="spacingAndGlyphs" >Layout Sketch</text>
<path d="M47,344.5 L58,333 L60.5,335.5 L49.5,347 L47,347.5 Z" fill="none" stroke="#b5b5b5" stroke-width="1" />
<line x1="46" y1="346.8" x2="61" y2="346.8" stroke="#b5b5b5" stroke-width="1" />
<text x="66.80" y="343.70" font-size="13.5" fill="#a6a6a6" font-weight="normal" font-style="italic" font-family="Liberation Sans" textLength="73.50" lengthAdjust="spacingAndGlyphs" >Plate Sketch</text>
<path d="M46.5,359 L48,357 L60,357 L61,359 L61,371.5 L48.5,371.5 L46.5,369.5 Z" fill="none" stroke="#b0b0b0" stroke-width="1" />
<rect x="49.5" y="361" width="11.5" height="10.5" fill="#c9c9c9" stroke="#aaa" stroke-width="0.8" />
<text x="66.80" y="369.50" font-size="13.5" fill="#a6a6a6" font-weight="normal" font-style="italic" font-family="Liberation Sans" textLength="79.20" lengthAdjust="spacingAndGlyphs" >Plate Extrude</text>
<path d="M45,388 L50.5,393.5 L56,388" fill="none" stroke="#3a3a3a" stroke-width="1.9" />
<path d="M66,396.5 L66,385 L71,385 L72.5,387 L81,387 L81,396.5 Z" fill="none" stroke="#444" stroke-width="1.1" />
<text x="86.30" y="395.40" font-size="13.5" fill="#2a2a2a" font-weight="normal" font-style="normal" font-family="Liberation Sans" textLength="48.30" lengthAdjust="spacingAndGlyphs" >Belts (3)</text>
<line x1="49.5" y1="404" x2="49.5" y2="481.5" stroke="#cfcfcf" stroke-width="1" />
<line x1="44" y1="481.5" x2="54" y2="481.5" stroke="#cfcfcf" stroke-width="1" />
<circle cx="68.5" cy="411.3" r="3.2" fill="none" stroke="#bdbdbd" stroke-width="1" />
<circle cx="75.5" cy="418.3" r="2" fill="none" stroke="#bdbdbd" stroke-width="1" />
<path d="M66,414.3 L74,420.3 M71.5,409.3 L77,416.8" fill="none" stroke="#cfcfcf" stroke-width="0.8" />
<text x="86.00" y="421.30" font-size="13.5" fill="#a6a6a6" font-weight="normal" font-style="italic" font-family="Liberation Sans" textLength="61.80" lengthAdjust="spacingAndGlyphs" >Motor Belt</text>
<rect x="199" y="406.90000000000003" width="2" height="1.8" fill="#2b2b2b" />
<rect x="199" y="409.90000000000003" width="2" height="1.8" fill="#2b2b2b" />
<rect x="199" y="419.90000000000003" width="2" height="1.8" fill="#2b2b2b" />
<rect x="199" y="422.90000000000003" width="2" height="1.8" fill="#2b2b2b" />
<circle cx="200" cy="415.8" r="2.7" fill="#2b2b2b" />
<circle cx="68.5" cy="437" r="3.2" fill="none" stroke="#bdbdbd" stroke-width="1" />
<circle cx="75.5" cy="444" r="2" fill="none" stroke="#bdbdbd" stroke-width="1" />
<path d="M66,440 L74,446 M71.5,435 L77,442.5" fill="none" stroke="#cfcfcf" stroke-width="0.8" />
<text x="86.00" y="447.00" font-size="13.5" fill="#a6a6a6" font-weight="normal" font-style="italic" font-family="Liberation Sans" textLength="72.00" lengthAdjust="spacingAndGlyphs" >Roller Belt 1</text>
<rect x="199" y="432.6" width="2" height="1.8" fill="#2b2b2b" />
<rect x="199" y="435.6" width="2" height="1.8" fill="#2b2b2b" />
<rect x="199" y="445.6" width="2" height="1.8" fill="#2b2b2b" />
<rect x="199" y="448.6" width="2" height="1.8" fill="#2b2b2b" />
<circle cx="200" cy="441.5" r="2.7" fill="#2b2b2b" />
<circle cx="68.5" cy="463.6" r="3.2" fill="none" stroke="#bdbdbd" stroke-width="1" />
<circle cx="75.5" cy="470.6" r="2" fill="none" stroke="#bdbdbd" stroke-width="1" />
<path d="M66,466.6 L74,472.6 M71.5,461.6 L77,469.1" fill="none" stroke="#cfcfcf" stroke-width="0.8" />
<text x="86.00" y="473.60" font-size="13.5" fill="#a6a6a6" font-weight="normal" font-style="italic" font-family="Liberation Sans" textLength="73.00" lengthAdjust="spacingAndGlyphs" >Roller Belt 2</text>
<rect x="199" y="459.20000000000005" width="2" height="1.8" fill="#2b2b2b" />
<rect x="199" y="462.20000000000005" width="2" height="1.8" fill="#2b2b2b" />
<rect x="199" y="472.20000000000005" width="2" height="1.8" fill="#2b2b2b" />
<rect x="199" y="475.20000000000005" width="2" height="1.8" fill="#2b2b2b" />
<circle cx="200" cy="468.1" r="2.7" fill="#2b2b2b" />
<rect x="45" y="492" width="190" height="6.5" fill="#ababab" />
<line x1="40" y1="708.5" x2="240" y2="708.5" stroke="#d6d6d6" stroke-width="1" />
<path d="M45,719.5 L50.5,725.0 L56,719.5" fill="none" stroke="#3a3a3a" stroke-width="1.9" />
<text x="63.40" y="726.70" font-size="13.5" fill="#2a2a2a" font-weight="normal" font-style="normal" font-family="Liberation Sans" textLength="48.40" lengthAdjust="spacingAndGlyphs" >Parts (1)</text>
<path d="M65,748 L68.5,744.5 L72.5,744.5 L72.5,741 L76,740 L80,742 L80,755 L68,755 L65,752 Z" fill="none" stroke="#555" stroke-width="1" />
<path d="M65,748 L76.5,748 L76.5,742 M76.5,748 L80,752 M65,752 L76.5,752" fill="none" stroke="#555" stroke-width="0.8" />
<text x="85.30" y="752.80" font-size="13.5" fill="#2a2a2a" font-weight="normal" font-style="normal" font-family="Liberation Sans" textLength="67.10" lengthAdjust="spacingAndGlyphs" >Origin Cube</text>
<path d="M872.5,1049 L872.5,401 L1919,401" fill="none" stroke="#bcd3e0" stroke-width="1.3" />
<text x="880.60" y="423.75" font-size="19" fill="#93c3d6" font-weight="normal" font-style="normal" font-family="Liberation Sans" textLength="123.20" lengthAdjust="spacingAndGlyphs" >Layout Sketch</text>
<rect x="1288.5" y="541" width="429" height="429" fill="#f1f5f9" stroke="#a3b6cc" stroke-width="1.3" />
<line x1="1288.5" y1="756" x2="1717.5" y2="756" stroke="#8aa4c4" stroke-width="1.3" />
<line x1="1503" y1="541" x2="1503" y2="970" stroke="#7f9cc0" stroke-width="1.4" />
<text x="1291.60" y="558.00" font-size="17.4" fill="#3c63b2" font-weight="normal" font-style="normal" font-family="Liberation Sans" textLength="44.40" lengthAdjust="spacingAndGlyphs" >Right</text>
<rect x="1431.5" y="755.5" width="143.5" height="143" fill="#bcbdbf" stroke="#111" stroke-width="1.6" />
<line x1="1503" y1="756" x2="1503" y2="898.5" stroke="#8297b2" stroke-width="1.3" />
<circle cx="1503" cy="756" r="4.2" fill="#fff" stroke="#111" stroke-width="1.6" />
<circle cx="1503" cy="756" r="1.4" fill="#111" />
<line x1="644" y1="451.7" x2="966.3" y2="451.7" stroke="#111" stroke-width="2.1" stroke-dasharray="29.4 6.5 3.7 6.5" stroke-dashoffset="39.45"/>
<line x1="644" y1="559.3" x2="966.3" y2="559.3" stroke="#111" stroke-width="2.1" stroke-dasharray="29.4 6.5 3.7 6.5" stroke-dashoffset="35.95"/>
<line x1="644" y1="505.5" x2="966.3" y2="505.5" stroke="#111" stroke-width="2.1" stroke-dasharray="29.4 6.5 3.7 6.5" stroke-dashoffset="39.45"/>
<line x1="966.3" y1="451.7" x2="1288.6" y2="451.7" stroke="#111" stroke-width="2.1" stroke-dasharray="29.4 6.5 3.7 6.5" stroke-dashoffset="39.45"/>
<line x1="966.3" y1="559.3" x2="1288.6" y2="559.3" stroke="#111" stroke-width="2.1" stroke-dasharray="29.4 6.5 3.7 6.5" stroke-dashoffset="35.95"/>
<line x1="966.3" y1="505.5" x2="1288.6" y2="505.5" stroke="#111" stroke-width="2.1" stroke-dasharray="29.4 6.5 3.7 6.5" stroke-dashoffset="39.45"/>
<line x1="1288.6" y1="505.5" x2="1431.3" y2="505.5" stroke="#111" stroke-width="2.1" stroke-dasharray="29.4 6.5 3.7 6.5" stroke-dashoffset="35.55"/>
<path d="M660.69,556.85 A54,54 0 0 1 631.39,558.01 M670.04,552.81 A54,54 0 0 1 666.74,554.48 M616.01,551.68 A54,54 0 0 1 596.00,530.24 M625.18,556.11 A54,54 0 0 1 621.76,554.71 M590.75,514.45 A54,54 0 0 1 593.92,485.30 M593.38,524.29 A54,54 0 0 1 592.21,520.78 M602.44,471.02 A54,54 0 0 1 626.60,454.38 M596.71,479.43 A54,54 0 0 1 598.60,476.26 M642.98,451.51 A54,54 0 0 1 671.35,458.94 M632.86,452.66 A54,54 0 0 1 636.51,452.02 M684.22,469.47 A54,54 0 0 1 697.12,495.81 M676.74,462.56 A54,54 0 0 1 679.61,464.90 M697.55,512.44 A54,54 0 0 1 675.53,549.34 M697.90,502.26 A54,54 0 0 1 698.00,505.96" fill="none" stroke="#111" stroke-width="2.1" />
<circle cx="644" cy="451.7" r="3.3" fill="#111" />
<circle cx="644" cy="505.5" r="3.3" fill="#111" />
<circle cx="644" cy="559.3" r="3.3" fill="#111" />
<path d="M982.99,556.85 A54,54 0 0 1 953.69,558.01 M992.34,552.81 A54,54 0 0 1 989.04,554.48 M938.31,551.68 A54,54 0 0 1 918.30,530.24 M947.48,556.11 A54,54 0 0 1 944.06,554.71 M913.05,514.45 A54,54 0 0 1 916.22,485.30 M915.68,524.29 A54,54 0 0 1 914.51,520.78 M924.74,471.02 A54,54 0 0 1 948.90,454.38 M919.01,479.43 A54,54 0 0 1 920.90,476.26 M965.28,451.51 A54,54 0 0 1 993.65,458.94 M955.16,452.66 A54,54 0 0 1 958.81,452.02 M1006.52,469.47 A54,54 0 0 1 1019.42,495.81 M999.04,462.56 A54,54 0 0 1 1001.91,464.90 M1019.85,512.44 A54,54 0 0 1 997.83,549.34 M1020.20,502.26 A54,54 0 0 1 1020.30,505.96" fill="none" stroke="#111" stroke-width="2.1" />
<circle cx="966.3" cy="451.7" r="3.3" fill="#111" />
<circle cx="966.3" cy="505.5" r="3.3" fill="#111" />
<circle cx="966.3" cy="559.3" r="3.3" fill="#111" />
<path d="M1305.29,556.85 A54,54 0 0 1 1275.99,558.01 M1314.64,552.81 A54,54 0 0 1 1311.34,554.48 M1260.61,551.68 A54,54 0 0 1 1240.60,530.24 M1269.78,556.11 A54,54 0 0 1 1266.36,554.71 M1235.35,514.45 A54,54 0 0 1 1238.52,485.30 M1237.98,524.29 A54,54 0 0 1 1236.81,520.78 M1247.04,471.02 A54,54 0 0 1 1271.20,454.38 M1241.31,479.43 A54,54 0 0 1 1243.20,476.26 M1287.58,451.51 A54,54 0 0 1 1315.95,458.94 M1277.46,452.66 A54,54 0 0 1 1281.11,452.02 M1328.82,469.47 A54,54 0 0 1 1341.72,495.81 M1321.34,462.56 A54,54 0 0 1 1324.21,464.90 M1342.15,512.44 A54,54 0 0 1 1320.13,549.34 M1342.50,502.26 A54,54 0 0 1 1342.60,505.96" fill="none" stroke="#111" stroke-width="2.1" />
<circle cx="1288.6" cy="451.7" r="3.3" fill="#111" />
<circle cx="1288.6" cy="505.5" r="3.3" fill="#111" />
<circle cx="1288.6" cy="559.3" r="3.3" fill="#111" />
<circle cx="1503" cy="505.5" r="40.3" fill="#dfe0e3" stroke="#111" stroke-width="2.1" />
<path d="M1562.87,544.58 A71.5,71.5 0 0 1 1542.26,565.26 M1567.82,535.67 A71.5,71.5 0 0 1 1566.17,538.99 M1527.36,572.72 A71.5,71.5 0 0 1 1498.46,576.86 M1536.67,568.57 A71.5,71.5 0 0 1 1533.37,570.23 M1482.07,573.87 A71.5,71.5 0 0 1 1456.49,559.81 M1492.01,576.15 A71.5,71.5 0 0 1 1488.37,575.49 M1445.18,547.57 A71.5,71.5 0 0 1 1433.19,520.95 M1451.75,555.36 A71.5,71.5 0 0 1 1449.24,552.64 M1431.51,504.37 A71.5,71.5 0 0 1 1437.92,475.89 M1432.07,514.55 A71.5,71.5 0 0 1 1431.70,510.87 M1446.54,461.63 A71.5,71.5 0 0 1 1468.78,442.72 M1440.87,470.11 A71.5,71.5 0 0 1 1442.79,466.94 M1484.24,436.51 A71.5,71.5 0 0 1 1513.38,434.76 M1474.62,439.87 A71.5,71.5 0 0 1 1478.05,438.49 M1529.47,439.08 A71.5,71.5 0 0 1 1553.81,455.20 M1519.76,435.99 A71.5,71.5 0 0 1 1523.33,436.95 M1564.07,468.32 A71.5,71.5 0 0 1 1573.84,495.83 M1558.17,460.02 A71.5,71.5 0 0 1 1560.45,462.93 M1574.16,512.49 A71.5,71.5 0 0 1 1570.29,529.66 M1574.43,502.30 A71.5,71.5 0 0 1 1574.50,506.00" fill="none" stroke="#111" stroke-width="2.1" />
<line x1="1431" y1="505.5" x2="1466.5" y2="505.5" stroke="#111" stroke-width="2.1" />
<line x1="1473.4" y1="505.5" x2="1476.9" y2="505.5" stroke="#111" stroke-width="2.1" />
<line x1="1483.2" y1="505.5" x2="1503" y2="505.5" stroke="#111" stroke-width="2.1" />
<line x1="1509.5" y1="505.5" x2="1599" y2="505.5" stroke="#111" stroke-width="1.1" />
<line x1="1503" y1="505.5" x2="1503" y2="577" stroke="#111" stroke-width="1.1" />
<circle cx="1503" cy="505.5" r="3" fill="#111" />
<circle cx="1431.3" cy="505.5" r="6.4" fill="#fff" stroke="#111" stroke-width="2.0" />
<circle cx="1431.3" cy="505.5" r="2.7" fill="#111" />
<line x1="1427.8" y1="505.5" x2="1434.8" y2="505.5" stroke="#111" stroke-width="1" />
<line x1="1431.3" y1="502.0" x2="1431.3" y2="509.0" stroke="#111" stroke-width="1" />
<circle cx="1574.5" cy="505.5" r="6.4" fill="#fff" stroke="#111" stroke-width="2.0" />
<circle cx="1574.5" cy="505.5" r="2.7" fill="#111" />
<line x1="1571.0" y1="505.5" x2="1578.0" y2="505.5" stroke="#111" stroke-width="1" />
<line x1="1574.5" y1="502.0" x2="1574.5" y2="509.0" stroke="#111" stroke-width="1" />
<circle cx="1503" cy="433.5" r="6.4" fill="#fff" stroke="#111" stroke-width="2.0" />
<circle cx="1503" cy="433.5" r="2.7" fill="#111" />
<line x1="1499.5" y1="433.5" x2="1506.5" y2="433.5" stroke="#111" stroke-width="1" />
<line x1="1503" y1="430.0" x2="1503" y2="437.0" stroke="#111" stroke-width="1" />
<circle cx="1503" cy="577" r="6.4" fill="#fff" stroke="#111" stroke-width="2.0" />
<circle cx="1503" cy="577" r="2.7" fill="#111" />
<line x1="1499.5" y1="577" x2="1506.5" y2="577" stroke="#111" stroke-width="1" />
<line x1="1503" y1="573.5" x2="1503" y2="580.5" stroke="#111" stroke-width="1" />
<line x1="643.5" y1="510" x2="643.5" y2="667" stroke="#111" stroke-width="1.2" />
<line x1="966.5" y1="510" x2="966.5" y2="667" stroke="#111" stroke-width="1.3" />
<line x1="1288.5" y1="510" x2="1288.5" y2="664" stroke="#111" stroke-width="1.3" />
<line x1="1503" y1="583" x2="1503" y2="610" stroke="#111" stroke-width="1.2" />
<line x1="644" y1="663.5" x2="754.4" y2="663.5" stroke="#111" stroke-width="1.2" />
<line x1="830" y1="663.5" x2="966.3" y2="663.5" stroke="#111" stroke-width="1.2" />
<path d="M644.50,663.50 L660.50,659.50 L660.50,667.50 Z" fill="#111" />
<path d="M965.80,663.50 L949.80,667.50 L949.80,659.50 Z" fill="#111" />
<line x1="966.3" y1="660.5" x2="1068.75" y2="660.5" stroke="#111" stroke-width="1.2" />
<line x1="1144.4" y1="660.5" x2="1288.6" y2="660.5" stroke="#111" stroke-width="1.2" />
<path d="M966.80,660.50 L982.80,656.50 L982.80,664.50 Z" fill="#111" />
<path d="M1288.10,660.50 L1272.10,664.50 L1272.10,656.50 Z" fill="#111" />
<line x1="1288.6" y1="604.5" x2="1385.6" y2="604.5" stroke="#111" stroke-width="1.2" />
<line x1="1407.5" y1="604.5" x2="1503" y2="604.5" stroke="#111" stroke-width="1.2" />
<path d="M1289.10,604.50 L1305.10,600.50 L1305.10,608.50 Z" fill="#111" />
<path d="M1502.50,604.50 L1486.50,608.50 L1486.50,600.50 Z" fill="#111" />
<line x1="1595.5" y1="506" x2="1595.5" y2="709" stroke="#111" stroke-width="1.2" />
<line x1="1595.5" y1="742" x2="1595.5" y2="756" stroke="#111" stroke-width="1.2" />
<path d="M1595.50,506.00 L1599.50,522.00 L1591.50,522.00 Z" fill="#111" />
<path d="M1595.50,755.50 L1591.50,739.50 L1599.50,739.50 Z" fill="#111" />
<line x1="1575" y1="756" x2="1600" y2="756" stroke="#111" stroke-width="1.4" />
<line x1="873" y1="378" x2="935.5" y2="460.5" stroke="#111" stroke-width="1.1" />
<path d="M935.50,460.50 L923.09,451.08 L929.79,446.01 Z" fill="#111" />
<line x1="1499" y1="394" x2="1502.3" y2="430.7" stroke="#111" stroke-width="1.1" />
<path d="M1502.30,430.70 L1496.77,416.14 L1505.14,415.38 Z" fill="#111" />
<line x1="1572.9" y1="387.3" x2="1510" y2="428.4" stroke="#111" stroke-width="1.1" />
<path d="M1510.00,428.40 L1520.26,416.68 L1524.85,423.71 Z" fill="#111" />
<line x1="1608.7" y1="438" x2="1564.2" y2="465.8" stroke="#111" stroke-width="1.1" />
<path d="M1564.20,465.80 L1574.70,454.29 L1579.15,461.41 Z" fill="#111" />
<line x1="1547.3" y1="593.5" x2="1522.3" y2="543.8" stroke="#111" stroke-width="1.1" />
<path d="M1522.30,543.80 L1532.79,555.31 L1525.29,559.09 Z" fill="#111" />
<rect x="794.4" y="325" width="137.5" height="23" fill="#e0eef8" rx="3" />
<text x="798.75" y="340.00" font-size="15" fill="#1b2430" font-weight="normal" font-style="normal" font-family="Liberation Sans" textLength="127.50" lengthAdjust="spacingAndGlyphs" >#PulleyPD_5mm(24)</text>
<rect x="692.5" y="625" width="220.5" height="22.5" fill="#e0eef8" rx="3" />
<text x="697.50" y="640.00" font-size="15" fill="#1b2430" font-weight="normal" font-style="normal" font-family="Liberation Sans" textLength="210.50" lengthAdjust="spacingAndGlyphs" >#BeltCTC_5mm(70,24,24)-0.015in</text>
<rect x="1006.25" y="621.9" width="221.25" height="21.85" fill="#e0eef8" rx="3" />
<text x="1011.25" y="635.60" font-size="15" fill="#1b2430" font-weight="normal" font-style="normal" font-family="Liberation Sans" textLength="210.60" lengthAdjust="spacingAndGlyphs" >#BeltCTC_5mm(70,24,24)-0.015in</text>
<rect x="1537.3" y="334.4" width="112.3" height="22.3" fill="#e0eef8" rx="3" />
<text x="1542.30" y="350.60" font-size="15" fill="#1b2430" font-weight="normal" font-style="normal" font-family="Liberation Sans" textLength="103.40" lengthAdjust="spacingAndGlyphs" >#CloseFit_10_32</text>
<text x="815.00" y="370.00" font-size="15" fill="#9a9a9a" font-weight="normal" font-style="italic" font-family="Liberation Serif" textLength="13.80" lengthAdjust="spacingAndGlyphs" >fx</text>
<text x="835.00" y="369.60" font-size="16.9" fill="#1a1a1a" font-weight="normal" font-style="normal" font-family="Liberation Sans" textLength="55.60" lengthAdjust="spacingAndGlyphs" >Ø1.504</text>
<text x="1545.60" y="379.00" font-size="15" fill="#9a9a9a" font-weight="normal" font-style="italic" font-family="Liberation Serif" textLength="13.80" lengthAdjust="spacingAndGlyphs" >fx</text>
<text x="1566.20" y="378.40" font-size="16.9" fill="#1a1a1a" font-weight="normal" font-style="normal" font-family="Liberation Sans" textLength="55.60" lengthAdjust="spacingAndGlyphs" >Ø0.196</text>
<text x="1490.00" y="386.00" font-size="16.5" fill="#1a1a1a" font-weight="normal" font-style="normal" font-family="Liberation Sans" textLength="17.80" lengthAdjust="spacingAndGlyphs" >4x</text>
<text x="1614.60" y="433.40" font-size="16.5" fill="#1a1a1a" font-weight="normal" font-style="normal" font-family="Liberation Sans" textLength="20.00" lengthAdjust="spacingAndGlyphs" >Ø2</text>
<text x="760.60" y="671.00" font-size="15" fill="#9a9a9a" font-weight="normal" font-style="italic" font-family="Liberation Serif" textLength="13.80" lengthAdjust="spacingAndGlyphs" >fx</text>
<text x="781.90" y="670.60" font-size="17.3" fill="#1a1a1a" font-weight="normal" font-style="normal" font-family="Liberation Sans" textLength="41.85" lengthAdjust="spacingAndGlyphs" >4.513</text>
<text x="1075.00" y="667.50" font-size="15" fill="#9a9a9a" font-weight="normal" font-style="italic" font-family="Liberation Serif" textLength="13.80" lengthAdjust="spacingAndGlyphs" >fx</text>
<text x="1095.60" y="666.90" font-size="17.3" fill="#1a1a1a" font-weight="normal" font-style="normal" font-family="Liberation Sans" textLength="42.40" lengthAdjust="spacingAndGlyphs" >4.513</text>
<text x="1392.00" y="611.25" font-size="16.5" fill="#1a1a1a" font-weight="normal" font-style="normal" font-family="Liberation Sans" textLength="9.00" lengthAdjust="spacingAndGlyphs" >3</text>
<text x="1527.60" y="613.70" font-size="16.9" fill="#1a1a1a" font-weight="normal" font-style="normal" font-family="Liberation Sans" textLength="52.40" lengthAdjust="spacingAndGlyphs" >Ø1.125</text>
<text x="1584.00" y="730.60" font-size="16.5" fill="#1a1a1a" font-weight="normal" font-style="normal" font-family="Liberation Sans" textLength="23.00" lengthAdjust="spacingAndGlyphs" >3.5</text>
<path d="M1823,100.5 L1829.8,91.8 L1836.6,100.5 Z" fill="#8c8c8c" />
<path d="M1822.4,231 L1836.6,231 L1829.5,240.6 Z" fill="#8c8c8c" />
<path d="M1765,158.7 L1755.5,165.8 L1765,173 Z" fill="#8c8c8c" />
<path d="M1895,158.7 L1905,165.8 L1895,173 Z" fill="#8c8c8c" />
<path d="M1809,101.5 C1797,105 1789,111 1783,118" fill="none" stroke="#8c8c8c" stroke-width="3.6" />
<path d="M1776.5,124.5 L1779,112.5 L1788,120.5 Z" fill="#8c8c8c" />
<path d="M1851,101.5 C1863,105 1871,111 1877,118" fill="none" stroke="#8c8c8c" stroke-width="3.6" />
<path d="M1883.5,124.5 L1881,112.5 L1872,120.5 Z" fill="#8c8c8c" />
<path d="M1812,137.5 L1848,137.5 L1858.5,148 L1858.5,183 L1848,193.5 L1812,193.5 L1801.8,183 L1801.8,148 Z" fill="#f0f1f3" />
<path d="M1812,137.5 L1848,137.5 L1848,145 L1812,145 Z" fill="#e7e8eb" />
<path d="M1812,186 L1848,186 L1848,193.5 L1812,193.5 Z" fill="#e7e8eb" />
<path d="M1801.8,148 L1809,148 L1809,183 L1801.8,183 Z" fill="#e2e6ee" />
<path d="M1851,148 L1858.5,148 L1858.5,183 L1851,183 Z" fill="#e7e8eb" />
<rect x="1807.5" y="143" width="45.5" height="45.5" fill="#ffffff" rx="7" />
<line x1="1799.6" y1="137.5" x2="1799.6" y2="196.5" stroke="#3a3aa8" stroke-width="1.3" />
<line x1="1799.6" y1="196.5" x2="1858.7" y2="196.5" stroke="#3aa04a" stroke-width="1.3" />
<text x="1796.30" y="131.00" font-size="12" fill="#5a5fb5" font-weight="normal" font-style="normal" font-family="Liberation Sans" textLength="6.50" lengthAdjust="spacingAndGlyphs" >Z</text>
<text x="1865.00" y="200.50" font-size="12" fill="#6cbf6f" font-weight="normal" font-style="normal" font-family="Liberation Sans" textLength="7.00" lengthAdjust="spacingAndGlyphs" >Y</text>
<text x="1817.00" y="168.50" font-size="13" fill="#1a1a1a" font-weight="normal" font-style="normal" font-family="Liberation Sans" textLength="26.70" lengthAdjust="spacingAndGlyphs" >Right</text>
<path d="M1875,222.5 L1884,227 L1884,236.5 L1875,241 L1866,236.5 L1866,227 Z" fill="#c8c8c8" stroke="#333" stroke-width="1" />
<path d="M1866,227 L1875,231.5 L1884,227 M1875,231.5 L1875,241" fill="none" stroke="#333" stroke-width="0.9" />
<path d="M1875,231.5 L1884,227 L1884,236.5 L1875,241 Z" fill="#eee" stroke="#333" stroke-width="0.9" />
<path d="M1892.5,229.6 L1899.6,229.6 L1896,233.5 Z" fill="#222" />
<rect x="1888.5" y="433.5" width="40" height="132" fill="#fff" stroke="#8f8f8f" stroke-width="1" />
<line x1="1888.5" y1="466.5" x2="1919" y2="466.5" stroke="#8f8f8f" stroke-width="1" />
<line x1="1888.5" y1="499.5" x2="1919" y2="499.5" stroke="#8f8f8f" stroke-width="1" />
<line x1="1888.5" y1="532.5" x2="1919" y2="532.5" stroke="#8f8f8f" stroke-width="1" />
<rect x="1888.5" y="576" width="40" height="99" fill="#fff" stroke="#8f8f8f" stroke-width="1" />
<line x1="1888.5" y1="609" x2="1919" y2="609" stroke="#8f8f8f" stroke-width="1" />
<line x1="1888.5" y1="642" x2="1919" y2="642" stroke="#8f8f8f" stroke-width="1" />
<path d="M1895.5,455 L1904,442 L1910,444 L1914.5,454 Z" fill="#8f8f8f" />
<path d="M1898,455 L1908,446 L1914.5,455 Z" fill="#b5b5b5" />
<rect x="1895.5" y="454.5" width="19.5" height="6" fill="#fff" stroke="#999" stroke-width="1" rx="1.5" />
<rect x="1897" y="456" width="4" height="3" fill="#555" />
<rect x="1909.5" y="455.5" width="4.5" height="4.5" fill="#ccc" />
<path d="M1899.5,481 L1907,477.5 L1914,481 L1914,488.5 L1906.5,492 L1899.5,488.5 Z" fill="#fff" stroke="#222" stroke-width="1" />
<path d="M1899.5,481 L1906.5,484.5 L1914,481 M1906.5,484.5 L1906.5,492" fill="none" stroke="#222" stroke-width="0.9" />
<rect x="1895.5" y="474.5" width="9.5" height="7.5" fill="#4d8fe6" stroke="#1f4ea8" stroke-width="1" />
<line x1="1898.6666666666667" y1="474.5" x2="1898.6666666666667" y2="482.0" stroke="#fff" stroke-width="0.6" />
<line x1="1901.8333333333333" y1="474.5" x2="1901.8333333333333" y2="482.0" stroke="#fff" stroke-width="0.6" />
<line x1="1895.5" y1="478.25" x2="1905.0" y2="478.25" stroke="#fff" stroke-width="0.8" />
<path d="M1900.5,515 L1906,512.5 L1911,515 L1911,520.5 L1905.5,523 L1900.5,520.5 Z" fill="#fff" stroke="#333" stroke-width="0.9" />
<rect x="1895.5" y="507.5" width="9.5" height="7" fill="#555" stroke="#222" stroke-width="1" />
<line x1="1898.6666666666667" y1="507.5" x2="1898.6666666666667" y2="514.5" stroke="#fff" stroke-width="0.6" />
<line x1="1901.8333333333333" y1="507.5" x2="1901.8333333333333" y2="514.5" stroke="#fff" stroke-width="0.6" />
<line x1="1895.5" y1="511.0" x2="1905.0" y2="511.0" stroke="#fff" stroke-width="0.8" />
<path d="M1898.5,510 C1897,510 1897,511 1897,513 L1897,516 L1896,517 L1897,518 L1897,523 C1897,524.5 1897.5,525 1898.5,525" fill="none" stroke="#333" stroke-width="1" />
<path d="M1911.5,509 C1913,509 1913,510 1913,512 L1913,516 L1914,517 L1913,518 L1913,523 C1913,524.5 1912.5,525 1911.5,525" fill="none" stroke="#333" stroke-width="1" />
<rect x="1895.5" y="540.5" width="9.5" height="7" fill="#555" stroke="#222" stroke-width="1" />
<line x1="1898.6666666666667" y1="540.5" x2="1898.6666666666667" y2="547.5" stroke="#fff" stroke-width="0.6" />
<line x1="1901.8333333333333" y1="540.5" x2="1901.8333333333333" y2="547.5" stroke="#fff" stroke-width="0.6" />
<line x1="1895.5" y1="544.0" x2="1905.0" y2="544.0" stroke="#fff" stroke-width="0.8" />
<path d="M1897.5,547 C1895,550 1895,555 1897.5,558" fill="none" stroke="#222" stroke-width="1.5" />
<path d="M1912.5,543 C1915.5,547 1915.5,554 1912.5,558" fill="none" stroke="#222" stroke-width="1.5" />
<path d="M1900,556 L1909,546 M1902,548 C1905,547 1907,554 1910,554" fill="none" stroke="#222" stroke-width="1.7" />
<rect x="1893.5" y="581.5" width="23" height="22.5" fill="#d9d9d9" rx="3" />
<path d="M1896,590 L1914,587 L1915,598 L1897,601 Z" fill="#1f2a3a" />
<circle cx="1902" cy="594.5" r="2.6" fill="#4f7ad0" />
<circle cx="1909.5" cy="593.5" r="2.6" fill="#4f7ad0" />
<rect x="1895" y="615.5" width="20.5" height="20" fill="#4caf50" rx="1" />
<rect x="1897.5" y="618" width="7" height="14" fill="#e9f7e9" />
<rect x="1905.5" y="618" width="7" height="14" fill="#e9f7e9" />
<rect x="1895" y="648.5" width="20" height="20" fill="#1a4fb4" rx="1" />
<rect x="1897.5" y="651.5" width="7" height="13" fill="#fff" />
<rect x="1905.5" y="651.5" width="7" height="13" fill="#fff" />
<path d="M1822,1036 L1832,1036 M1822,1036 L1822,1041.5 L1837,1041.5 L1837,1034" fill="none" stroke="#222" stroke-width="1.3" />
<path d="M1826.5,1036 C1826.5,1031 1837.5,1031 1837.5,1034.5 C1837.5,1037 1826.5,1037 1826.5,1034.5 Z" fill="none" stroke="#222" stroke-width="1.2" />
<path d="M1855.5,1042.5 C1855.5,1027 1874.5,1027 1874.5,1042.5 Z" fill="none" stroke="#222" stroke-width="1.4" />
<path d="M1860.5,1040 C1861,1033 1869,1033 1869.5,1040 C1867,1037.5 1863,1037.5 1860.5,1040 Z" fill="none" stroke="#222" stroke-width="1" />
<path d="M1895,1029.5 L1906,1029.5 M1900.5,1029.5 L1900.5,1042.5 M1893,1042.5 L1907,1042.5" fill="none" stroke="#222" stroke-width="1.4" />
<path d="M1895,1030 L1893,1038 L1897,1038 Z M1906,1030 L1904,1038 L1908,1038 Z" fill="none" stroke="#222" stroke-width="1" />
<rect x="322" y="79" width="220" height="220" fill="#ffffff" filter="url(#sh)"/>
<line x1="322" y1="107.5" x2="542" y2="107.5" stroke="#e2e2e2" stroke-width="1" />
<text x="328.50" y="98.00" font-size="14.5" fill="#222" font-weight="bold" font-style="normal" font-family="Liberation Sans" textLength="82.75" lengthAdjust="spacingAndGlyphs" >Layout Sketch</text>
<rect x="486.25" y="79.4" width="27.5" height="27.5" fill="#0a8c17" />
<path d="M492,93.5 L497.5,99 L507.5,87.5" fill="none" stroke="#fff" stroke-width="3.2" />
<path d="M523,89 L533,99 M533,89 L523,99" fill="none" stroke="#c5232b" stroke-width="3" />
<rect x="325.5" y="113.5" width="187" height="43" fill="#fff" stroke="#d5d5d5" stroke-width="1" rx="1.5" />
<text x="331.00" y="128.00" font-size="10.2" fill="#555" font-weight="normal" font-style="normal" font-family="Liberation Sans" textLength="57.75" lengthAdjust="spacingAndGlyphs" >Sketch plane</text>
<text x="332.50" y="150.00" font-size="13.6" fill="#4a4a4a" font-weight="normal" font-style="normal" font-family="Liberation Sans" textLength="65.50" lengthAdjust="spacingAndGlyphs" >Right plane</text>
<path d="M493.5,142.5 L500,149 M500,142.5 L493.5,149" fill="none" stroke="#555" stroke-width="1.3" />
<circle cx="526" cy="125.4" r="8.3" fill="none" stroke="#444" stroke-width="1.5" />
<path d="M526,119.5 L526,125.6 L532,125.6" fill="none" stroke="#444" stroke-width="1.5" />
<rect x="326.5" y="170" width="11.5" height="11.5" fill="#fff" stroke="#666" stroke-width="1" rx="2" />
<text x="342.50" y="180.70" font-size="13.6" fill="#4a4a4a" font-weight="normal" font-style="normal" font-family="Liberation Sans" textLength="105.50" lengthAdjust="spacingAndGlyphs" >Disable imprinting</text>
<rect x="326.5" y="197.5" width="11.5" height="11.5" fill="#fff" stroke="#666" stroke-width="1" rx="2" />
<text x="342.50" y="208.20" font-size="13.6" fill="#4a4a4a" font-weight="normal" font-style="normal" font-family="Liberation Sans" textLength="100.50" lengthAdjust="spacingAndGlyphs" >Show constraints</text>
<rect x="326.5" y="225" width="11.5" height="11.5" fill="#1c4fb0" rx="2" />
<path d="M328.8,231 L331.3,233.5 L335.8,228.2" fill="none" stroke="#fff" stroke-width="1.8" />
<text x="342.50" y="235.70" font-size="13.6" fill="#4a4a4a" font-weight="normal" font-style="normal" font-family="Liberation Sans" textLength="105.00" lengthAdjust="spacingAndGlyphs" >Show expressions</text>
<rect x="326.5" y="252.3" width="11.5" height="11.5" fill="#1c4fb0" rx="2" />
<path d="M328.8,258.3 L331.3,260.8 L335.8,255.5" fill="none" stroke="#fff" stroke-width="1.8" />
<text x="342.50" y="263.00" font-size="13.6" fill="#4a4a4a" font-weight="normal" font-style="normal" font-family="Liberation Sans" textLength="70.50" lengthAdjust="spacingAndGlyphs" >Show errors</text>
<rect x="441" y="274.5" width="21.5" height="21" fill="#fff" stroke="#aaa" stroke-width="1" rx="2" />
<circle cx="451.5" cy="285" r="7.3" fill="none" stroke="#222" stroke-width="1.4" />
<path d="M446,288 L454.5,279 L456.5,281 L448,290 Z" fill="none" stroke="#222" stroke-width="1" />
<line x1="455" y1="289" x2="459" y2="293" stroke="#222" stroke-width="1.4" />
<rect x="467" y="274.5" width="48.5" height="21" fill="#fff" stroke="#bbb" stroke-width="1" rx="2.5" />
<text x="478.75" y="289.40" font-size="13.6" fill="#2a2a2a" font-weight="normal" font-style="normal" font-family="Liberation Sans" textLength="25.65" lengthAdjust="spacingAndGlyphs" >Final</text>
<circle cx="531" cy="288" r="6" fill="#9d9d9d" />
<text x="527.80" y="292.20" font-size="10" fill="#fff" font-weight="bold" font-style="normal" font-family="Liberation Sans" textLength="6.20" lengthAdjust="spacingAndGlyphs" >?</text>
<rect x="40" y="1050" width="1879" height="29" fill="#d6d6d6" />
<line x1="648.5" y1="1050.5" x2="1919" y2="1050.5" stroke="#cbcbcb" stroke-width="1" />
<rect x="40" y="1049.5" width="34" height="30" fill="#cfcfcf" />
<path d="M49,1064.5 L63.5,1064.5 M56.25,1057 L56.25,1072" fill="none" stroke="#555" stroke-width="2.4" />
<rect x="74" y="1049.5" width="34" height="30" fill="#e2e2e2" />
<path d="M83,1062 L92,1053.5 L95,1056.3 L95,1054 L98.5,1054 L98.5,1059.5 L101,1062 L101,1071 L83,1071 Z" fill="#555" />
<rect x="90" y="1065" width="4" height="6" fill="#e2e2e2" />
<path d="M108,1049.5 L238,1049.5 L245.5,1064.5 L238,1079 L108,1079 L115,1064.5 Z" fill="#ffffff" />
<path d="M245.5,1049.5 L238,1049.5 L245.5,1064.5 L238,1079 L245.5,1079 Z" fill="#e6e6e6" />
<text x="130.00" y="1067.80" font-size="15.1" fill="#555" font-weight="normal" font-style="normal" font-family="Liberation Sans" textLength="93.40" lengthAdjust="spacingAndGlyphs" >Exercise 2: Dea</text>
<rect x="246.5" y="1050" width="202" height="29" fill="#e6e6e6" />
<circle cx="266.5" cy="1062.5" r="6.3" fill="#7fa5d6" />
<circle cx="266.5" cy="1062.5" r="2.2" fill="#e6e6e6" />
<rect x="265.5" y="1056" width="2" height="3" fill="#e6e6e6" />
<path d="M278,1057 L281,1054 L293,1054 L296,1057 L296,1072 L281,1072 L278,1069 Z" fill="#fff" stroke="#333" stroke-width="1.1" />
<rect x="279.5" y="1055.5" width="11" height="11" fill="#8a8a8a" stroke="#555" stroke-width="0.8" />
<text x="300.60" y="1068.40" font-size="15.1" fill="#5e5e5e" font-weight="normal" font-style="normal" font-family="Liberation Sans" textLength="127.00" lengthAdjust="spacingAndGlyphs" >Exercise 2 Assembly</text>
<rect x="449" y="1049" width="199.5" height="30" fill="#ffffff" />
<rect x="450" y="1075.8" width="198" height="2" fill="#1d428f" />
<path d="M461.5,1058 L464,1056 L470,1056 L470,1072 L461.5,1072 Z M467.5,1056 L467.5,1072" fill="none" stroke="#333" stroke-width="1" />
<path d="M470,1055 L472.5,1053.5 L477.5,1053.5 L477.5,1072 L470,1072 M474.5,1054 L474.5,1072" fill="none" stroke="#333" stroke-width="1" />
<text x="482.30" y="1068.40" font-size="15.1" fill="#2e2e2e" font-weight="normal" font-style="normal" font-family="Liberation Sans" textLength="134.90" lengthAdjust="spacingAndGlyphs" >Exercise 2 Part Studio</text>
</svg>
</body></html>
